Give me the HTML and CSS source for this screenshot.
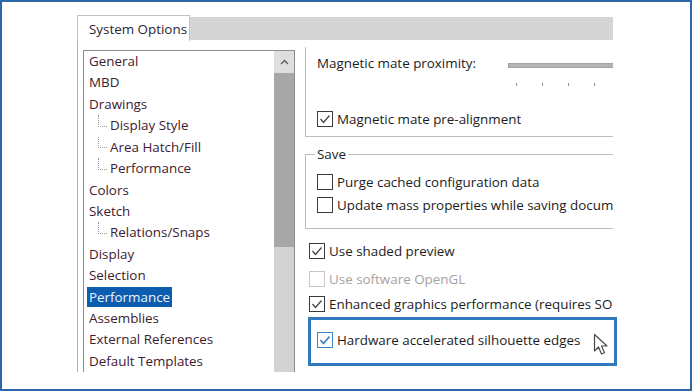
FILE: index.html
```html
<!DOCTYPE html>
<html lang="en">
<head>
    <meta charset="UTF-8">
    <meta name="viewport" content="width=device-width, initial-scale=1.0">
    <title>System Options - Performance</title>
    <link rel="stylesheet" href="styles.css">
</head>
<body>
    <div class="frame">
        <div class="dialog">
            <!-- Tab strip -->
            <div class="tabbar">
                <div class="tab">System Options</div>
                <div class="tab-fill"></div>
            </div>

            <div class="dialog-body">
                <!-- Options tree -->
                <div class="tree">
                    <ul class="tree-list">
                        <li class="tree-item"><span>General</span></li>
                        <li class="tree-item"><span>MBD</span></li>
                        <li class="tree-item"><span>Drawings</span></li>
                        <li class="tree-item child"><span>Display Style</span></li>
                        <li class="tree-item child"><span>Area Hatch/Fill</span></li>
                        <li class="tree-item child"><span>Performance</span></li>
                        <li class="tree-item"><span>Colors</span></li>
                        <li class="tree-item"><span>Sketch</span></li>
                        <li class="tree-item child"><span>Relations/Snaps</span></li>
                        <li class="tree-item"><span>Display</span></li>
                        <li class="tree-item"><span>Selection</span></li>
                        <li class="tree-item selected"><span>Performance</span></li>
                        <li class="tree-item"><span>Assemblies</span></li>
                        <li class="tree-item"><span>External References</span></li>
                        <li class="tree-item"><span>Default Templates</span></li>
                    </ul>
                    <div class="scrollbar">
                        <div class="scroll-up">
                            <svg width="9" height="6" viewBox="0 0 9 6"><polyline points="1,5 4.5,1.5 8,5" fill="none" stroke="#5a5a5a" stroke-width="1.3"/></svg>
                        </div>
                        <div class="scroll-thumb"></div>
                    </div>
                </div>

                <!-- Options panel -->
                <div class="options">
                    <div class="group mate-group">
                        <div class="row">
                            <span class="label proximity-label">Magnetic mate proximity:</span>
                            <div class="slider-track"></div>
                        </div>
                        <div class="ticks">
                            <i></i><i></i><i></i><i></i>
                        </div>
                        <label class="row check-row">
                            <span class="cb"><svg width="14" height="14" viewBox="0 0 14 14"><polyline points="2.5,7 5.5,10.5 11.5,3.5" fill="none" stroke="#444" stroke-width="1.3"/></svg></span>
                            <span class="label">Magnetic mate pre-alignment</span>
                        </label>
                    </div>

                    <fieldset class="save-group">
                        <legend>Save</legend>
                        <label class="row check-row">
                            <span class="cb"></span>
                            <span class="label">Purge cached configuration data</span>
                        </label>
                        <label class="row check-row second">
                            <span class="cb"></span>
                            <span class="label">Update mass properties while saving docum</span>
                        </label>
                    </fieldset>

                    <label class="row check-row loose shaded">
                        <span class="cb"><svg width="14" height="14" viewBox="0 0 14 14"><polyline points="2.5,7 5.5,10.5 11.5,3.5" fill="none" stroke="#444" stroke-width="1.3"/></svg></span>
                        <span class="label">Use shaded preview</span>
                    </label>
                    <label class="row check-row loose disabled opengl">
                        <span class="cb"></span>
                        <span class="label">Use software OpenGL</span>
                    </label>
                    <label class="row check-row loose enhanced">
                        <span class="cb"><svg width="14" height="14" viewBox="0 0 14 14"><polyline points="2.5,7 5.5,10.5 11.5,3.5" fill="none" stroke="#444" stroke-width="1.3"/></svg></span>
                        <span class="label">Enhanced graphics performance (requires SO</span>
                    </label>

                    <div class="highlight">
                        <label class="row check-row">
                            <span class="cb cb-blue"><svg width="14" height="14" viewBox="0 0 14 14"><polyline points="2.5,7 5.5,10.5 11.5,3.5" fill="none" stroke="#2f78c4" stroke-width="1.5"/></svg></span>
                            <span class="label">Hardware accelerated silhouette edges</span>
                        </label>
                        <svg class="cursor" width="16" height="23" viewBox="0 0 16 23">
                            <path d="M1.5 1.5 V18 L5.5 14 L8.5 21 L11.5 19.8 L8.5 13 H14 Z" fill="#fff" stroke="#4a4a4a" stroke-width="1.2" stroke-linejoin="round"/>
                        </svg>
                    </div>
                </div>
            </div>
        </div>
    </div>
</body>
</html>
```

FILE: styles.css
```css
/* Basic Styles */
html, body {
    margin: 0;
    padding: 0;
    background: #fff;
}

body {
    font-family: "Open Sans", "Noto Sans", sans-serif;
    font-size: 13.4px;
    color: #1c1c1c;
}

/* Outer screenshot frame */
.frame {
    width: 692px;
    height: 391px;
    box-sizing: border-box;
    border: 2px solid #2b67a9;
    padding: 13px 0 0 75px;
    overflow: hidden;
}

.dialog {
    width: 536px;
}

/* Tab strip */
.tabbar {
    display: flex;
    height: 26px;
}

.tab {
    width: 113px;
    box-sizing: border-box;
    padding: 3px 0 0 11px;
    border: 1px solid #c2c2c2;
    border-bottom: none;
    background: #fff;
    color: #2a2633;
    line-height: 20px;
    white-space: nowrap;
}

.tab-fill {
    flex: 1;
    margin-top: 2px;
    height: 23px;
    background: #d5d5d5;
}

.dialog-body {
    display: flex;
    height: 331px;
    border-left: 1px solid #b2b2b2;
    padding-left: 5px;
}

/* Tree */
.tree {
    display: flex;
    width: 212px;
    height: 322px;
    box-sizing: border-box;
    margin-top: 9px;
    border: 1px solid #8c8c8c;
    border-bottom: none;
}

.tree-list {
    flex: 1;
    list-style: none;
    margin: 0;
    padding: 0 0 0 3px;
    color: #3e2030;
}

.tree-item {
    position: relative;
    height: 21.43px;
    line-height: 21.43px;
    white-space: nowrap;
}

.tree-item span {
    display: inline-block;
    padding: 0 2px;
    line-height: 20px;
}

.tree-item.child {
    padding-left: 21px;
}

.tree-item.child::before {
    content: "";
    position: absolute;
    left: 11px;
    top: 0;
    width: 8px;
    height: 50%;
    border-left: 1px dotted #9a9a9a;
    border-bottom: 1px dotted #9a9a9a;
}

.tree-item.selected span {
    background: #0c5db0;
    color: #eef3fb;
}

.scrollbar {
    width: 20px;
    background: #d3d3d3;
}

.scroll-up {
    height: 22px;
    background: #dedede;
    display: flex;
    align-items: center;
    justify-content: center;
}

.scroll-thumb {
    height: 174px;
    background: #a7a7a7;
}

/* Options panel */
.options {
    width: 308px;
    margin-left: 10px;
}

.row {
    display: flex;
    align-items: center;
    height: 20px;
    line-height: 20px;
    white-space: nowrap;
    overflow: hidden;
}

.label {
    overflow: hidden;
}

.check-row .cb {
    flex: none;
    width: 14px;
    height: 14px;
    border: 1px solid #3a3a3a;
    margin-right: 4px;
    background: #fff;
}

.cb svg {
    display: block;
}

.group {
    border-left: 1px solid #bcbcbc;
    border-bottom: 1px solid #bcbcbc;
}

.mate-group {
    margin-top: 6px;
    padding: 6px 0 7px 11px;
}

.proximity-label {
    width: 191px;
    flex: none;
}

.slider-track {
    flex: 1;
    height: 3px;
    margin-top: 4px;
    background: #b4b4b4;
    border: 1px solid #a2a2a2;
    border-right: none;
}

.ticks {
    display: flex;
    gap: 25px;
    height: 3px;
    margin: 10px 0 0 199px;
}

.ticks i {
    width: 1px;
    height: 3px;
    background: #8e8e8e;
}

.mate-group .check-row {
    margin-top: 23px;
}

/* Save group box */
.save-group {
    min-width: 0;
    margin: 7px 0 0 0;
    padding: 8px 0 13px 11px;
    border: 1px solid #bcbcbc;
    border-right: none;
}

.save-group legend {
    padding: 0 2px;
    margin-left: -2px;
    line-height: 20px;
}

.save-group .second {
    margin-top: 3px;
}

/* Loose check boxes */
.loose {
    padding-left: 4px;
}

.shaded {
    margin-top: 12px;
}

.opengl {
    margin-top: 8px;
}

.enhanced {
    margin-top: 4px;
    height: 21px;
}

.disabled {
    color: #a3a3a3;
}

.disabled .cb {
    border-color: #c6c6c6;
}

/* Highlighted option */
.highlight {
    position: relative;
    width: 309px;
    height: 49px;
    box-sizing: border-box;
    margin: 3px 0 0 3px;
    padding: 10px 0 0 6px;
    border: 3px solid #2f7bbd;
}

.highlight .row {
    overflow: visible;
}

.cb.cb-blue {
    border-color: #3b83c8;
}

.cursor {
    position: absolute;
    left: 282px;
    top: 13px;
}
```
